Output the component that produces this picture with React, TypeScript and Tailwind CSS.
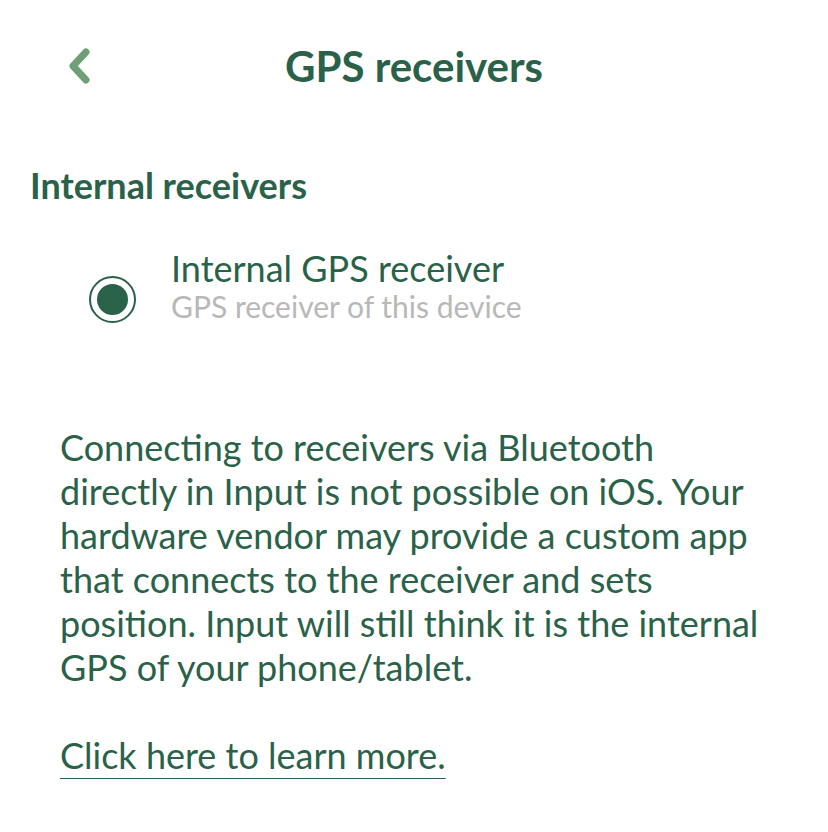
import React from 'react';

const green = 'text-[#2a6249]';

function BackChevron() {
  return (
    <svg width="26" height="38" viewBox="0 0 26 38" fill="none">
      <polyline
        points="20,5 7,19 20,33"
        stroke="#6f9f74"
        strokeWidth="7"
        strokeLinecap="round"
        strokeLinejoin="round"
      />
    </svg>
  );
}

function Header() {
  return (
    <div className="grid grid-cols-[1fr_auto_1fr] items-center h-[132px]">
      <div className="pl-[66px] flex items-center">
        <BackChevron />
      </div>
      <h1 className={`text-[42px] leading-[48px] font-bold ${green}`}>GPS receivers</h1>
      <div />
    </div>
  );
}

function RadioRow() {
  return (
    <div className="flex items-start pl-[89px] mt-[43px]">
      <div className="mt-[28px] w-[47px] h-[47px] rounded-full border-2 border-[#2a6249] flex items-center justify-center shrink-0">
        <div className="w-[31px] h-[31px] rounded-full bg-[#2a6249]" />
      </div>
      <div className="ml-[35px]">
        <div className={`text-[36px] leading-[40px] ${green}`}>Internal GPS receiver</div>
        <div className="text-[30px] leading-[37px] text-[#b8b8b8]">GPS receiver of this device</div>
      </div>
    </div>
  );
}

export default function App() {
  return (
    <div className="w-full min-h-[832px] bg-white font-['Lato',sans-serif]">
      <Header />
      <h2 className={`mt-[33px] pl-[30px] text-[36px] leading-[40px] font-bold ${green}`}>
        Internal receivers
      </h2>
      <RadioRow />
      <p className={`mt-[100px] px-[60px] text-[36px] leading-[44px] ${green}`}>
        Connecting to receivers via Bluetooth directly in Input is not possible on iOS. Your
        hardware vendor may provide a custom app that connects to the receiver and sets
        position. Input will still think it is the internal GPS of your phone/tablet.
      </p>
      <div className="mt-[44px] px-[60px]">
        <a
          href="#"
          className={`inline-block text-[36px] leading-[44px] ${green} underline decoration-1 underline-offset-[9px]`}
        >
          Click here to learn more.
        </a>
      </div>
    </div>
  );
}
